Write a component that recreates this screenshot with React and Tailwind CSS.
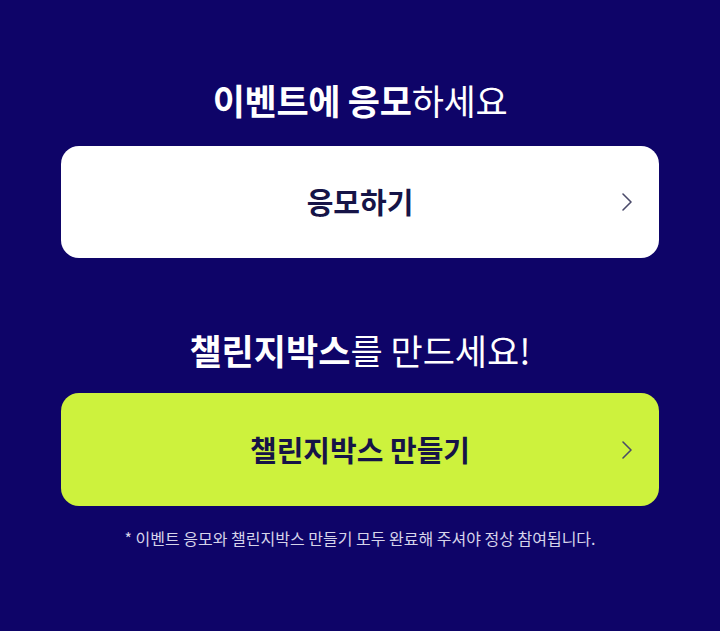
import React from 'react';

const font = { fontFamily: '"Noto Sans CJK KR", "Noto Sans", sans-serif' };

const Chevron = () => (
  <svg width="12" height="20" viewBox="0 0 12 20" fill="none" className="absolute right-[26px] top-1/2 -translate-y-1/2">
    <polyline points="2,2 10,10 2,18" stroke="#4a4a6a" strokeWidth="1.6" strokeLinecap="round" strokeLinejoin="round" />
  </svg>
);

const ActionButton = ({ label, className }) => (
  <button className={`relative w-full flex items-center justify-center rounded-[18px] ${className}`}>
    <span className="text-[29px] font-bold text-[#161447]">{label}</span>
    <Chevron />
  </button>
);

export default function App() {
  return (
    <div className="w-[720px] h-[631px] bg-[#0e0468] px-[61px] flex flex-col" style={font}>
      <h2 className="pt-[80px] h-[120px] leading-[40px] text-center text-[35px] text-white tracking-[-0.3px]">
        <span className="font-bold">이벤트에 응모</span>
        <span className="font-normal">하세요</span>
      </h2>
      <div className="mt-[26px]">
        <ActionButton label="응모하기" className="h-[112px] bg-white" />
      </div>
      <h2 className="mt-[72px] leading-[40px] text-center text-[35px] text-white">
        <span className="font-bold">챌린지박스</span>
        <span className="font-normal">를 만드세요!</span>
      </h2>
      <div className="mt-[23px]">
        <ActionButton label="챌린지박스 만들기" className="h-[113px] bg-[#cdf23d]" />
      </div>
      <p className="mt-[22px] leading-[20px] text-center text-[16px] text-[#d6d4ea]">
        * 이벤트 응모와 챌린지박스 만들기 모두 완료해 주셔야 정상 참여됩니다.
      </p>
    </div>
  );
}
